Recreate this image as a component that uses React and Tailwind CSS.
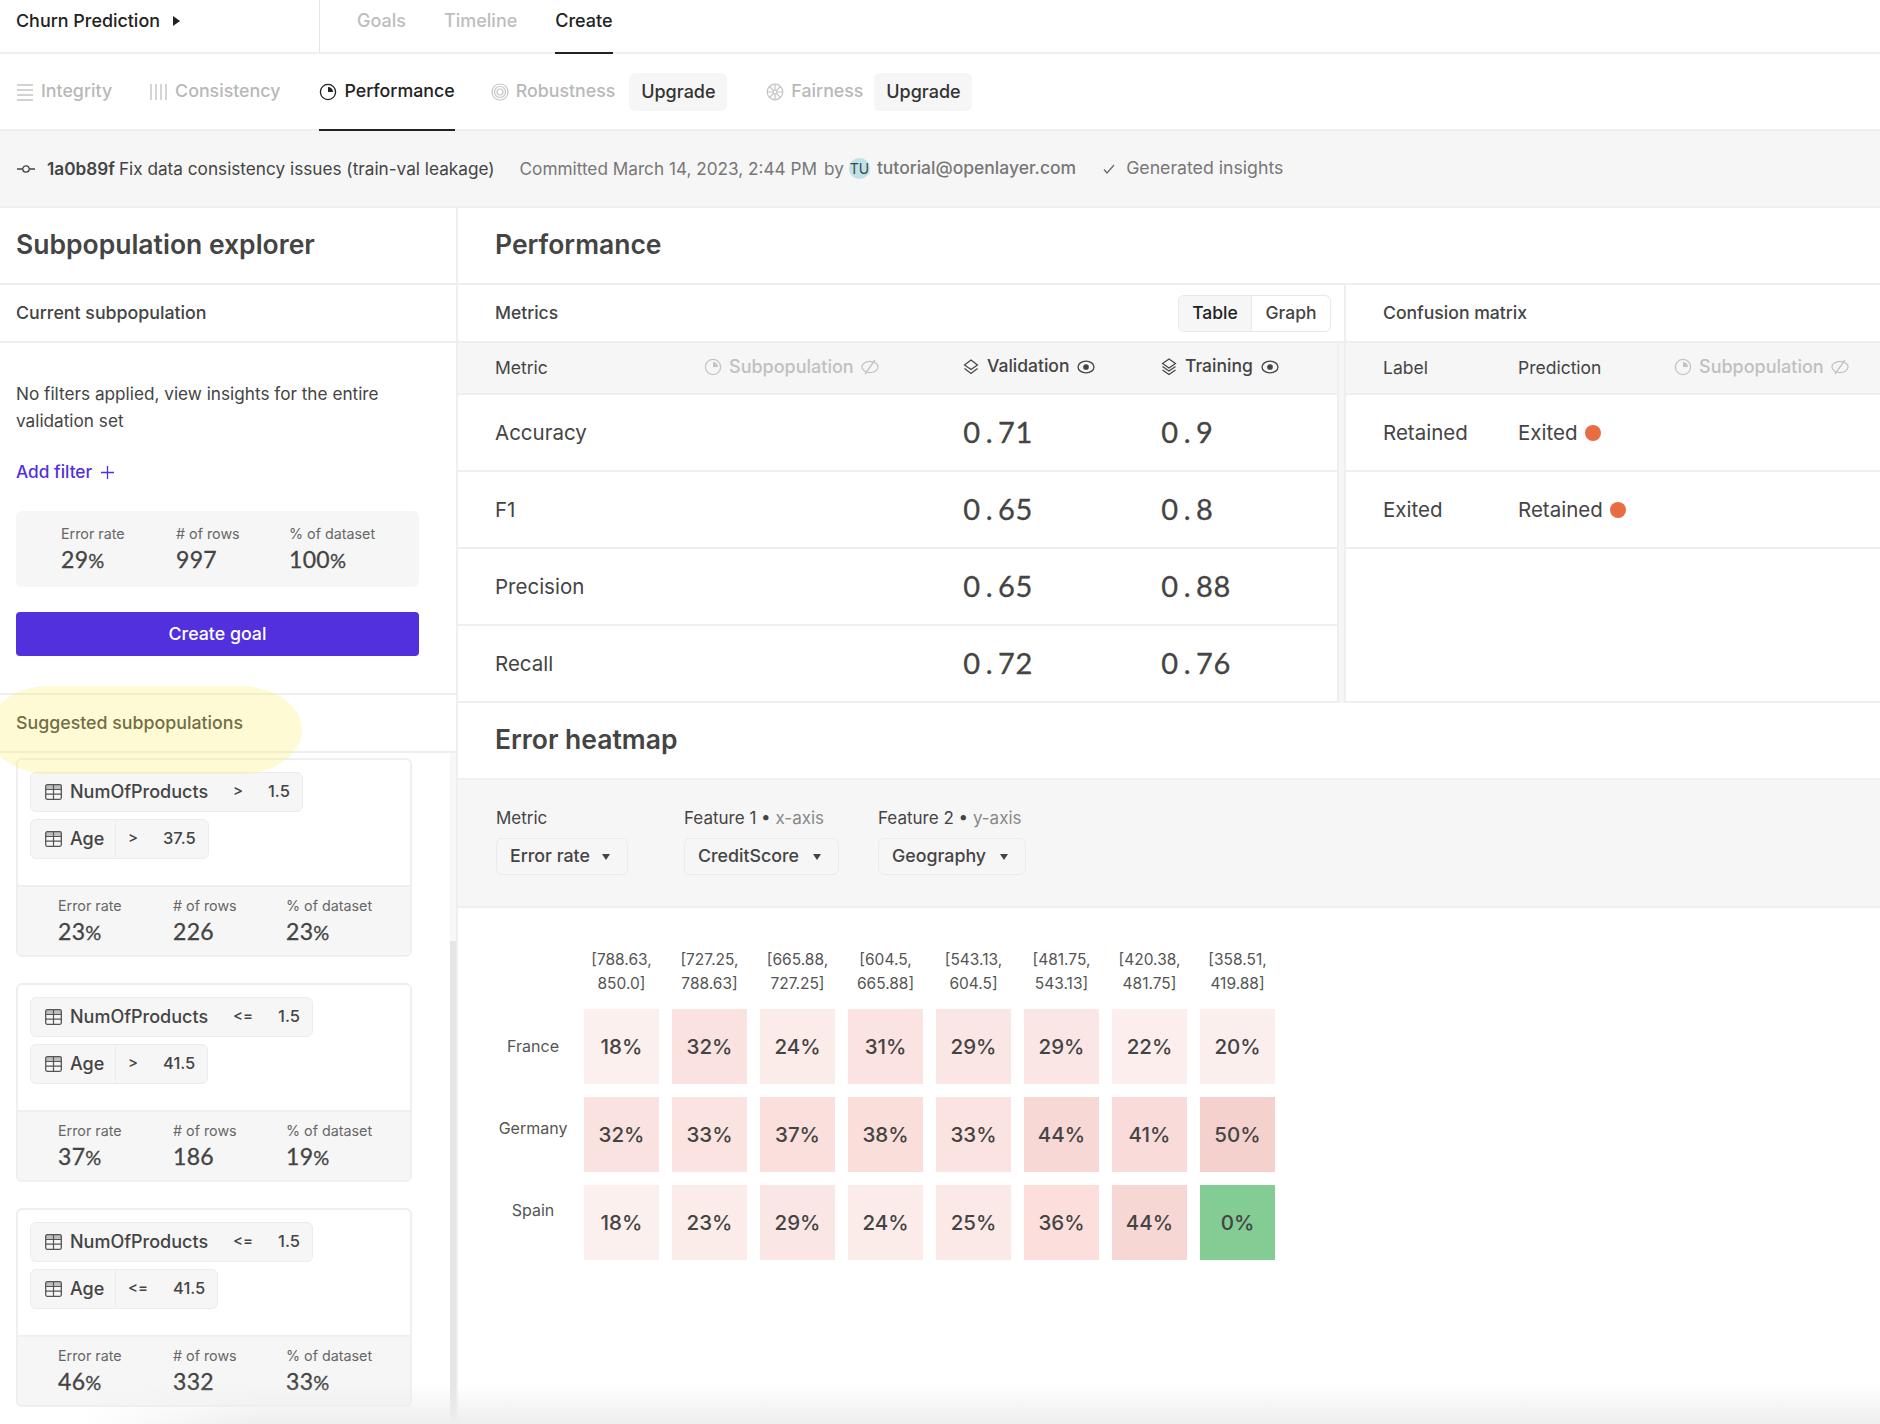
import React from "react";

const Pie = ({ c = "#222", s = 18 }) => (
  <svg width={s} height={s} viewBox="0 0 18 18" fill="none" className="shrink-0">
    <circle cx="9" cy="9" r="7.6" stroke={c} strokeWidth="1.3" />
    <path d="M9 4v5h5a5 5 0 0 0-5-5z" fill={c} />
  </svg>
);
const Lines = () => (
  <svg width="17" height="18" viewBox="0 0 17 18" fill="none" stroke="#c4c4c4" strokeWidth="1.6" className="shrink-0">
    <path d="M0 2h16M0 7h16M0 12h16M0 17h16" />
  </svg>
);
const Bars = () => (
  <svg width="18" height="18" viewBox="0 0 18 18" fill="none" stroke="#c4c4c4" strokeWidth="1.4" className="shrink-0">
    <path d="M1 1v16M6 1v16M11 1v16M16 1v16" />
  </svg>
);
const Target = () => (
  <svg width="18" height="18" viewBox="0 0 18 18" fill="none" stroke="#c4c4c4" strokeWidth="1.2" className="shrink-0">
    <circle cx="9" cy="9" r="8" />
    <circle cx="9" cy="9" r="5.5" />
    <circle cx="9" cy="9" r="3" />
  </svg>
);
const Wheel = () => (
  <svg width="18" height="18" viewBox="0 0 18 18" fill="none" stroke="#c4c4c4" strokeWidth="1.2" className="shrink-0">
    <circle cx="9" cy="9" r="7.8" />
    <path d="M9 1.2v15.6M1.2 9h15.6M3.5 3.5l11 11M14.5 3.5l-11 11" />
    <circle cx="9" cy="9" r="2" fill="#fff" />
  </svg>
);
const Commit = () => (
  <svg width="18" height="10" viewBox="0 0 18 10" fill="none" stroke="#444" strokeWidth="1.3" className="shrink-0">
    <circle cx="9" cy="5" r="3.2" />
    <path d="M0 5h5.8M12.2 5H18" />
  </svg>
);
const Eye = () => (
  <svg width="18" height="14" viewBox="0 0 18 14" fill="none" stroke="#444" strokeWidth="1.3" className="shrink-0">
    <ellipse cx="9" cy="7" rx="8" ry="5.8" />
    <circle cx="9" cy="7" r="2.2" fill="#444" />
  </svg>
);
const EyeOff = () => (
  <svg width="18" height="16" viewBox="0 0 18 16" fill="none" stroke="#c4c4c4" strokeWidth="1.3" className="shrink-0">
    <ellipse cx="9" cy="8" rx="8" ry="5.6" />
    <path d="M14 1L4 15" />
  </svg>
);
const LayerOne = () => (
  <svg width="16" height="16" viewBox="0 0 16 16" fill="none" stroke="#444" strokeWidth="1.2" className="shrink-0">
    <path d="M8 1l6.500 5L8 10.500 1.500 6z" />
    <path d="M1.500 9.500L8 14.500l6.500-5" />
  </svg>
);
const LayerTwo = () => (
  <svg width="16" height="18" viewBox="0 0 16 18" fill="none" stroke="#444" strokeWidth="1.2" className="shrink-0">
    <path d="M8 1l6.500 4.500L8 10 1.500 5.500z" />
    <path d="M1.500 8.500L8 13l6.500-4.500" />
    <path d="M1.500 12L8 16.500l6.500-4.500" />
  </svg>
);
const TableIcon = () => (
  <svg width="17" height="16" viewBox="0 0 17 16" fill="none" className="shrink-0">
    <rect x="0.700" y="0.700" width="15.600" height="14.600" rx="1.500" stroke="#555" strokeWidth="1.300" />
    <path d="M0.700 5.500h15.600M0.700 10.200h15.600M8.500 0.700v14.600" stroke="#555" strokeWidth="1.200" />
    <rect x="1" y="1" width="15" height="4" fill="#555" fillOpacity="0.350" />
  </svg>
);
const Check = () => (
  <svg width="12" height="10" viewBox="0 0 12 10" fill="none" stroke="#666" strokeWidth="1.200" className="shrink-0">
    <path d="M1 5.500l3 3.500L11 1" />
  </svg>
);
const CaretDown = () => (
  <svg width="8" height="6" viewBox="0 0 8 6" fill="#444" className="shrink-0">
    <path d="M0 0h8L4 6z" />
  </svg>
);

const NavItem = ({ icon, label, active, cls }) => (
  <div
    className={`flex items-center gap-[7px] self-stretch ${cls} ${
      active ? "-mb-[2px] border-b-2 border-[#222] text-[#222]" : "text-[#b8b8b8]"
    }`}
  >
    {icon}
    <span className="text-[17.800px] font-medium">{label}</span>
  </div>
);
const Upgrade = ({ cls }) => (
  <div className={`flex h-[38px] w-[98px] items-center justify-center rounded-md bg-[#f6f6f6] text-[18px] font-medium text-[#333] ${cls}`}>
    Upgrade
  </div>
);

const Stats = ({ values, cols, vCls }) => (
  <div className={`flex ${cols}`}>
    {[
      ["Error rate", "w-[115px]"],
      ["# of rows", "w-[113px]"],
      ["% of dataset", ""],
    ].map(([label, w], i) => (
      <div key={label} className={w}>
        <div className="text-[14.300px] leading-[20px] text-[#666]">{label}</div>
        <div className={`font-['Lato',sans-serif] text-[23px] leading-[28px] tracking-[0.300px] text-[#444] [-webkit-text-stroke:0.300px_#444] ${vCls}`}>
          {values[i].replace("%", "")}
          {values[i].includes("%") && <span className="text-[20px]">%</span>}
        </div>
      </div>
    ))}
  </div>
);

const Chip = ({ name, nameW, op, val, divided }) => (
  <div className="flex h-10 w-fit items-center rounded-md border border-[#ececec] bg-[#f6f6f6] pb-[1px] text-[18px] font-medium text-[#444]">
    <div className={`flex h-full items-center gap-2 pl-[14px] ${nameW} ${divided ? "border-r border-[#ececec]" : ""}`}>
      <TableIcon />
      <span>{name}</span>
    </div>
    <span className="pl-3 text-[15px]">{op}</span>
    <span className="ml-[25px] pr-[12px] text-[16.500px]">{val}</span>
  </div>
);

const Card = ({ chips, values }) => (
  <div className="w-[396px] overflow-hidden rounded-md border-2 border-[#efefef] bg-white">
    <div className="flex h-[125px] flex-col gap-[7px] pl-3 pt-3">
      {chips.map((c) => (
        <Chip key={c.name} {...c} />
      ))}
    </div>
    <div className="h-[70px] border-t-2 border-[#efefef] bg-[#f6f6f6] pt-[9px]">
      <Stats values={values} cols="pl-10" vCls="mt-[1px]" />
    </div>
  </div>
);

const Mono = ({ text }) => (
  <span className="-mt-[2px] flex font-['Lato',sans-serif] text-[29px] leading-none text-[#444] [-webkit-text-stroke:0.300px_#444]">
    {text.split("").map((ch, i) => (
      <span key={i} className="inline-block w-[17.400px] text-center">
        {ch}
      </span>
    ))}
  </span>
);

const MetricRow = ({ name, v, t }) => (
  <div className="grid h-[77px] grid-cols-[209px_259px_198px_1fr] items-center border-b-2 border-[#efefef] pl-[37px]">
    <span className="mt-[1px] text-[20.500px] text-[#444]">{name}</span>
    <span />
    <Mono text={v} />
    <Mono text={t} />
  </div>
);

const ConfRow = ({ a, b }) => (
  <div className="grid h-[77px] grid-cols-[135px_1fr] items-center border-b-2 border-[#efefef] pl-[37px] text-[20.500px] text-[#444]">
    <span className="mt-[1px]">{a}</span>
    <div className="flex items-center gap-[7px]">
      <span className="mt-[1px]">{b}</span>
      <span className="h-4 w-4 rounded-full bg-[#e96c42]" />
    </div>
  </div>
);

const Select = ({ label, cls }) => (
  <div className={`flex h-[37px] items-center justify-between rounded-md border border-[#ebebeb] bg-[#f6f6f6] pl-[13px] pr-[17px] text-[17.800px] font-medium text-[#444] ${cls}`}>
    <span>{label}</span>
    <CaretDown />
  </div>
);

const headers = [
  ["[788.63,", "850.0]"],
  ["[727.25,", "788.63]"],
  ["[665.88,", "727.25]"],
  ["[604.5,", "665.88]"],
  ["[543.13,", "604.5]"],
  ["[481.75,", "543.13]"],
  ["[420.38,", "481.75]"],
  ["[358.51,", "419.88]"],
];
const cells = [
  ["18%", "#fbf0ee"], ["32%", "#f9e2e0"], ["24%", "#fbebe9"], ["31%", "#fae3e1"], ["29%", "#fae6e4"], ["29%", "#fae6e4"], ["22%", "#fbeeec"], ["20%", "#fbefed"],
  ["32%", "#f9e2e0"], ["33%", "#fbe3e1"], ["37%", "#fadfdc"], ["38%", "#f9deda"], ["33%", "#fbe3e1"], ["44%", "#f7d8d5"], ["41%", "#f9dcd9"], ["50%", "#f5d1cd"],
  ["18%", "#fbf0ee"], ["23%", "#fbecea"], ["29%", "#fae6e4"], ["24%", "#fbebe9"], ["25%", "#fbe9e8"], ["36%", "#fcdfdc"], ["44%", "#f7d7d3"], ["0%", "#83cc94"],
];

export default function App() {
  return (
    <div className="relative h-[1424px] w-[1880px] overflow-hidden bg-white font-['Inter',sans-serif] text-[#444]">
      {/* top bar */}
      <div className="flex h-[54px] border-b-2 border-[#efefef]">
        <div className="flex w-[320px] items-start gap-[13px] border-r border-[#e5e5e5] pl-4 pt-[8px]">
          <span className="text-[17.900px] font-medium leading-[26px] text-[#222]">Churn Prediction</span>
          <svg width="7" height="10" viewBox="0 0 7 10" fill="#222" className="mt-[8px]"><path d="M0 0l7 5-7 5z" /></svg>
        </div>
        <div className="ml-[37px] flex h-[54px] items-start text-[18px] font-medium leading-[26px]">
          <span className="pt-[8px] text-[#bdbdbd]">Goals</span>
          <span className="ml-[38px] pt-[8px] text-[#bdbdbd]">Timeline</span>
          <span className="ml-[38px] h-full border-b-2 border-[#222] pt-[8px] text-[#222]">Create</span>
        </div>
      </div>

      {/* second nav */}
      <div className="flex h-[77px] items-center border-b-2 border-[#efefef] pl-[17px]">
        <NavItem icon={<Lines />} label="Integrity" cls="mr-[38px]" />
        <NavItem icon={<Bars />} label="Consistency" cls="mr-[39px]" />
        <NavItem icon={<Pie />} label="Performance" active cls="mr-[36px]" />
        <NavItem icon={<Target />} label="Robustness" cls="mr-[14px]" />
        <Upgrade cls="mr-[39px]" />
        <NavItem icon={<Wheel />} label="Fairness" cls="mr-[11px]" />
        <Upgrade />
      </div>

      {/* commit bar */}
      <div className="flex h-[77px] items-center border-b-2 border-[#efefef] bg-[#f6f6f6] pl-[17px] text-[17.200px]">
        <Commit />
        <span className="ml-3 font-semibold text-[#444]">1a0b89f</span>
        <span className="ml-1 text-[#444]">Fix data consistency issues (train-val leakage)</span>
        <span className="ml-[25px] text-[#777]">Committed March 14, 2023, 2:44 PM</span>
        <span className="ml-[7px] text-[#777]">by</span>
        <span className="ml-[5px] flex h-[21px] w-[21px] items-center justify-center rounded-full bg-[#bde3e8] text-[14px] text-[#444]">TU</span>
        <span className="ml-[7px] text-[17.500px] font-medium text-[#777]">tutorial@openlayer.com</span>
        <span className="ml-[27px]"><Check /></span>
        <span className="ml-[11px] text-[17.700px] text-[#777]">Generated insights</span>
      </div>

      <div className="flex">
        {/* left panel */}
        <div className="flex h-[1216px] w-[458px] shrink-0 flex-col border-r-2 border-[#efefef]">
          <div className="flex h-[77px] items-center border-b-2 border-[#efefef] pb-[2px] pl-4 text-[26.500px] font-semibold text-[#444]">
            Subpopulation explorer
          </div>
          <div className="flex h-[58px] items-center border-b-2 border-[#efefef] pl-4 text-[17.800px] font-medium text-[#444]">
            Current subpopulation
          </div>
          <div className="h-[352px] border-b-2 border-[#efefef] px-4 pt-[37px]">
            <p className="w-[390px] text-[17.200px] leading-[27px] text-[#444]">
              No filters applied, view insights for the entire validation set
            </p>
            <div className="mt-[26px] flex items-center gap-[9px] text-[17.300px] font-medium leading-[24px] text-[#5230de]">
              Add filter
              <svg width="13" height="13" viewBox="0 0 13 13" stroke="#5230de" strokeWidth="1.300"><path d="M6.500 0v13M0 6.500h13" /></svg>
            </div>
            <div className="mt-[27px] h-[76px] w-[403px] rounded-md bg-[#f6f6f6] pt-[13px]">
              <Stats values={["29%", "997", "100%"]} cols="pl-[45px]" vCls="mt-[1px]" />
            </div>
            <div className="mt-[25px] flex h-[44px] w-[403px] items-center justify-center rounded-[4px] bg-[#5230de] text-[17.800px] font-medium text-white">
              Create goal
            </div>
          </div>
          <div className="flex h-[58px] shrink-0 items-center border-b-2 border-[#efefef] pl-4 text-[17.800px] font-medium text-[#444]">
            Suggested subpopulations
          </div>
          <div className="flex min-h-0 flex-1 justify-between">
            <div className="flex flex-col gap-[26px] pl-[16px] pt-[5px]">
              <Card
                chips={[
                  { name: "NumOfProducts", nameW: "w-[190px]", op: ">", val: "1.5" },
                  { name: "Age", nameW: "w-[85px]", op: ">", val: "37.5", divided: true },
                ]}
                values={["23%", "226", "23%"]}
              />
              <Card
                chips={[
                  { name: "NumOfProducts", nameW: "w-[190px]", op: "<=", val: "1.5" },
                  { name: "Age", nameW: "w-[85px]", op: ">", val: "41.5", divided: true },
                ]}
                values={["37%", "186", "19%"]}
              />
              <Card
                chips={[
                  { name: "NumOfProducts", nameW: "w-[190px]", op: "<=", val: "1.5" },
                  { name: "Age", nameW: "w-[85px]", op: "<=", val: "41.5", divided: true },
                ]}
                values={["46%", "332", "33%"]}
              />
            </div>
            <div className="flex w-[6px] flex-col">
              <div className="h-[188px] bg-[#f7f7f7]" />
              <div className="flex-1 bg-[#e5e5e5]" />
            </div>
          </div>
        </div>

        {/* right panel */}
        <div className="min-w-0 flex-1">
          <div className="flex h-[77px] items-center border-b-2 border-[#efefef] pb-[2px] pl-[37px] text-[26.500px] font-semibold text-[#444]">
            Performance
          </div>
          <div className="flex h-[418px]">
            {/* metrics */}
            <div className="w-[888px] shrink-0 border-r-2 border-[#efefef]">
              <div className="flex h-[58px] items-center justify-between border-b-2 border-[#efefef] pl-[37px] pr-[13px]">
                <span className="text-[17.500px] font-medium">Metrics</span>
                <div className="flex h-[37px] overflow-hidden rounded-md border border-[#e8e8e8] text-[17.500px] font-medium">
                  <span className="flex w-[72px] items-center justify-center bg-[#f6f6f6] text-[#222]">Table</span>
                  <span className="flex w-[79px] items-center justify-center border-l border-[#e8e8e8] text-[#444]">Graph</span>
                </div>
              </div>
              <div className="flex">
                <div className="w-[879px]">
                  <div className="grid h-[52px] grid-cols-[209px_259px_198px_1fr] items-center border-b-2 border-[#efefef] bg-[#f6f6f6] pl-[37px] text-[17.500px]">
                    <span className="mt-[1px] text-[#444]">Metric</span>
                    <div className="-mt-[3px] flex items-center gap-[7px] text-[18px] font-medium text-[#c0c0c0]">
                      <Pie c="#c4c4c4" />
                      Subpopulation
                      <EyeOff />
                    </div>
                    <div className="-mt-[3px] flex items-center gap-[8px] font-medium text-[#444]">
                      <LayerOne />
                      Validation
                      <Eye />
                    </div>
                    <div className="-mt-[3px] flex items-center gap-[8px] font-medium text-[#444]">
                      <LayerTwo />
                      Training
                      <Eye />
                    </div>
                  </div>
                  <MetricRow name="Accuracy" v="0.71" t="0.9" />
                  <MetricRow name="F1" v="0.65" t="0.8" />
                  <MetricRow name="Precision" v="0.65" t="0.88" />
                  <MetricRow name="Recall" v="0.72" t="0.76" />
                </div>
                <div className="w-[7px] border-l-2 border-[#efefef] bg-[#f6f6f6]" />
              </div>
            </div>
            {/* confusion */}
            <div className="flex flex-1 flex-col border-b-2 border-[#efefef]">
              <div className="flex h-[58px] shrink-0 items-center border-b-2 border-[#efefef] pl-[37px] text-[17.600px] font-medium">
                Confusion matrix
              </div>
              <div className="grid h-[52px] shrink-0 grid-cols-[135px_156px_1fr] items-center border-b-2 border-[#efefef] bg-[#f6f6f6] pl-[37px] text-[17.500px]">
                <span className="mt-[1px]">Label</span>
                <span className="mt-[1px]">Prediction</span>
                <div className="-mt-[3px] flex items-center gap-[7px] text-[18px] font-medium text-[#c0c0c0]">
                  <Pie c="#c4c4c4" />
                  Subpopulation
                  <EyeOff />
                </div>
              </div>
              <ConfRow a="Retained" b="Exited" />
              <ConfRow a="Exited" b="Retained" />
            </div>
          </div>

          {/* heatmap */}
          <div className="flex h-[77px] items-center border-b-2 border-[#efefef] pb-[2px] pl-[37px] text-[26.500px] font-semibold text-[#444]">
            Error heatmap
          </div>
          <div className="flex h-[128px] border-b-2 border-[#efefef] bg-[#f6f6f6] pl-[38px] pt-[26px]">
            <div>
              <div className="mb-[8px] h-6 text-[17px] leading-6 text-[#444]">Metric</div>
              <Select label="Error rate" cls="w-[132px]" />
            </div>
            <div className="ml-[56px]">
              <div className="mb-[8px] h-6 text-[17px] leading-6 text-[#444]">
                Feature 1 • <span className="text-[#888]">x-axis</span>
              </div>
              <Select label="CreditScore" cls="w-[155px]" />
            </div>
            <div className="ml-[39px]">
              <div className="mb-[8px] h-6 text-[17px] leading-6 text-[#444]">
                Feature 2 • <span className="text-[#888]">y-axis</span>
              </div>
              <Select label="Geography" cls="w-[148px]" />
            </div>
          </div>
          <div className="pl-[38px] pt-[40px]">
            <div className="ml-[88px] flex gap-[13px]">
              {headers.map((h) => (
                <div key={h[0]} className="flex w-[75px] justify-center whitespace-nowrap text-center text-[15.500px] leading-6 text-[#555]">
                  <div>
                    {h[0]}
                    <br />
                    {h[1]}
                  </div>
                </div>
              ))}
            </div>
            <div className="mt-[13px] flex">
              <div className="-mt-[4px] mr-[14px] w-[74px] text-center text-[16px] text-[#555]">
                <div className="flex h-[82px] items-center justify-center">France</div>
                <div className="flex h-[82px] items-center justify-center">Germany</div>
                <div className="flex h-[82px] items-center justify-center">Spain</div>
              </div>
              <div className="grid grid-cols-[repeat(8,75px)] gap-[13px]">
                {cells.map(([t, c], i) => (
                  <div
                    key={i}
                    className="flex h-[75px] items-center justify-center pt-[1px] text-[20.500px] font-medium text-[#444]"
                    style={{ backgroundColor: c }}
                  >
                    {t}
                  </div>
                ))}
              </div>
            </div>
          </div>
        </div>
      </div>

      {/* yellow highlight */}
      <div className="pointer-events-none absolute left-[-12px] top-[686px] h-[88px] w-[314px] rounded-[62px/44px] bg-[#fcea50]/25" />
      {/* bottom shadow */}
      <div className="pointer-events-none absolute bottom-0 left-0 h-[40px] w-full bg-[linear-gradient(to_top,#eeeeee,rgba(238,238,238,0))] [mask-image:linear-gradient(to_right,transparent_80px,black_260px)]" />
    </div>
  );
}
